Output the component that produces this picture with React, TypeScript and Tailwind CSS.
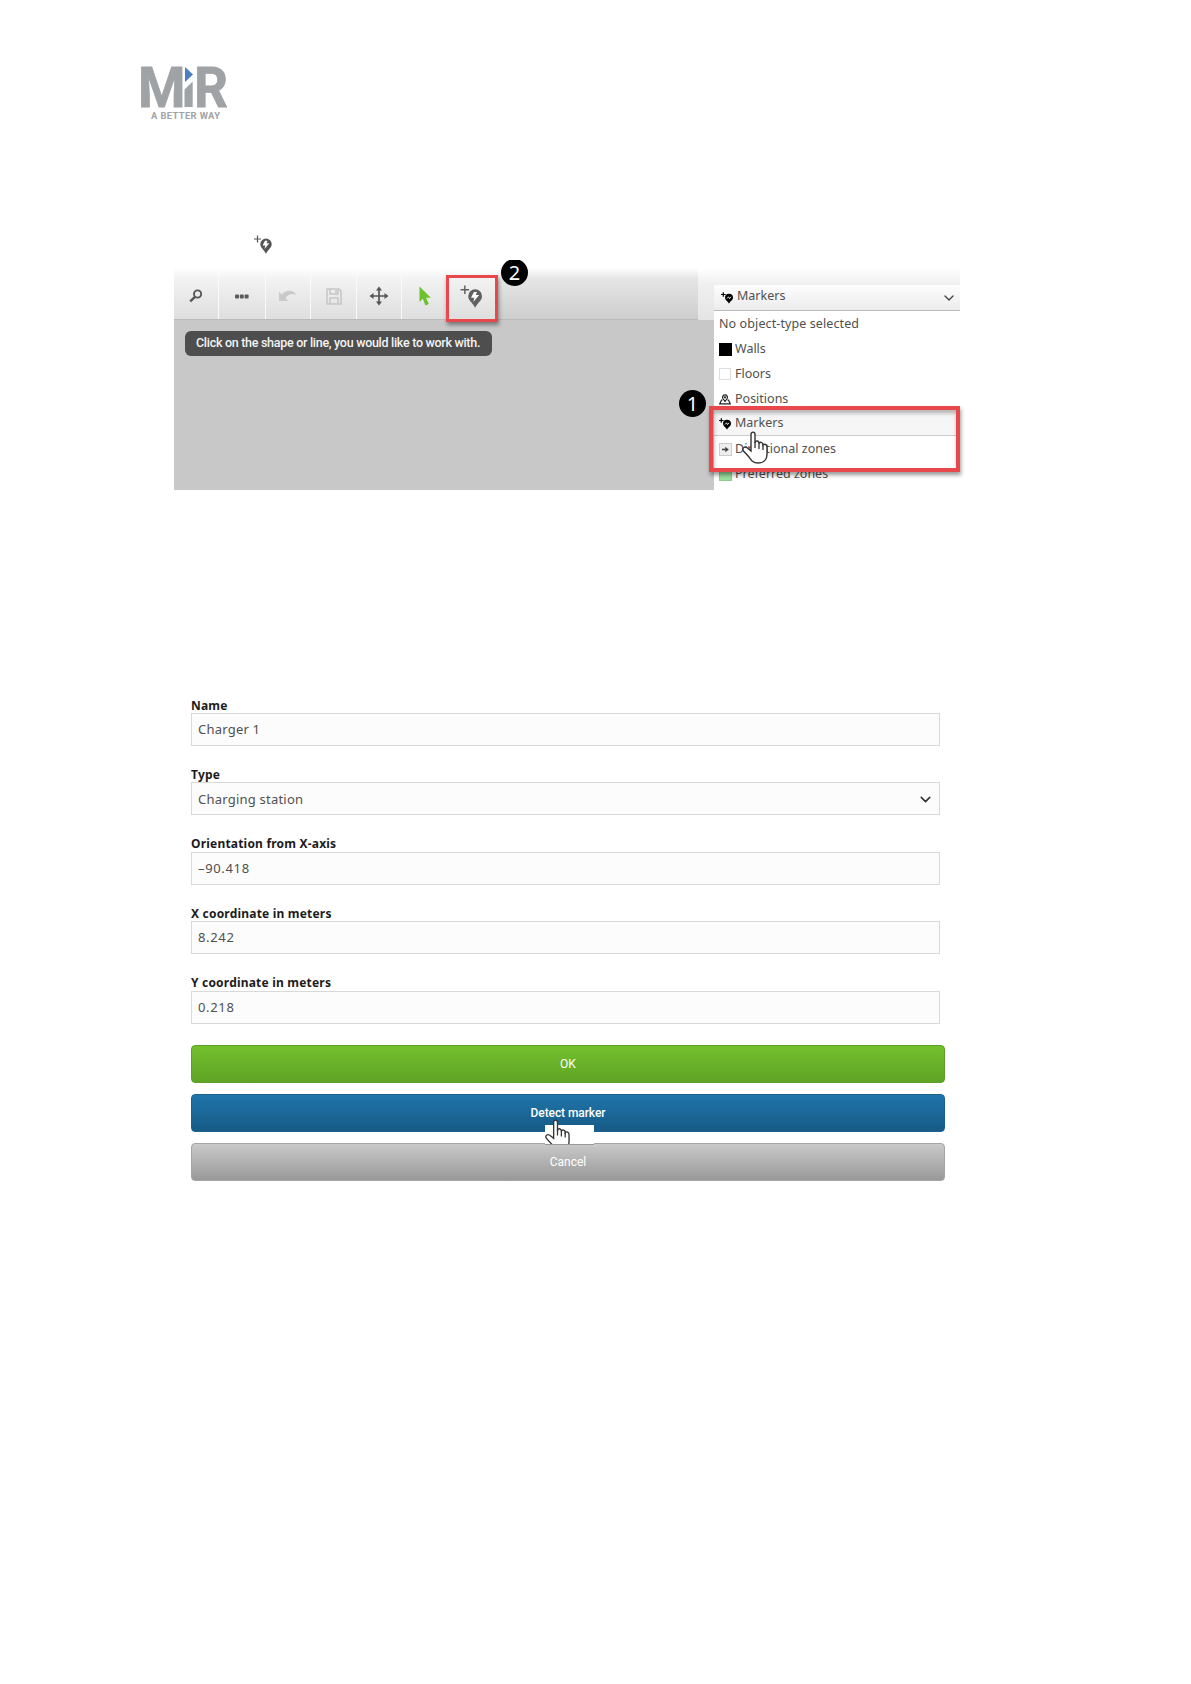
import { ChevronDown } from "lucide-react";
import clsx from "clsx";

const sans = "font-['Noto_Sans','Open_Sans',sans-serif]";
const roboto = "font-['Roboto',sans-serif]";

function Logo() {
  return (
    <svg width="90" height="56" viewBox="0 0 90 56" className="block overflow-visible">
      <g fill="#a0a3a6" className={roboto}>
        <text x="-3" y="40.7" fontSize="55.5" fontWeight="700" stroke="#a0a3a6" strokeWidth=".8" textLength="47.500" lengthAdjust="spacingAndGlyphs">
          M
        </text>
        <text x="53" y="40.7" fontSize="55.5" fontWeight="700" stroke="#a0a3a6" strokeWidth=".8" textLength="34" lengthAdjust="spacingAndGlyphs">
          R
        </text>
        <path d="M43.5 41V23.5L51.7 15.5V41Z" />
      </g>
      <path d="M44 1L52 8.5L44 16Z" fill="#4a7fc4" />
      <text x="10" y="53" fontSize="9.4" fontWeight="700" fill="#a0a3a6" textLength="69" className={roboto}>
        A BETTER WAY
      </text>
    </svg>
  );
}

function MarkerIcon({ className }: { className?: string }) {
  return (
    <svg viewBox="0 0 18 19" className={className}>
      <path d="M0 4H7M3.5 .5V7.5" stroke="currentColor" strokeWidth="1.2" fill="none" />
      <path d="M12 3.5a5.700 5.700 0 0 1 5.700 5.700c0 3.600-3.800 5.400-5.700 9.600C10.100 14.600 6.300 12.800 6.300 9.200A5.700 5.700 0 0 1 12 3.500Z" fill="currentColor" />
      <path d="M11 5.800L8.600 10.500H11.300L10.500 14L15.300 8.300H12.500L13.500 5.800" fill="white" />
    </svg>
  );
}

// Heavier version used at list size
function MarkerGlyph() {
  return (
    <svg width="12" height="12" viewBox="0 0 12 12" className="overflow-visible">
      <path d="M0 2.500H4.600M2.300 .2V4.800" stroke="black" strokeWidth="1.200" />
      <path d="M8 1.800a4 4 0 0 1 4 4c0 2.300-2.800 3.400-4 6C6.800 9.200 4 8.100 4 5.800A4 4 0 0 1 8 1.800Z" fill="black" />
      <path d="M6 6.500L7.500 4.800L8.500 6.600L10 4.800" stroke="white" strokeWidth=".9" fill="none" />
    </svg>
  );
}

function Hand({ className }: { className?: string }) {
  return (
    <svg viewBox="0 0 26 33" className={className}>
      <path
        d="M9 18V3.500C9 .3 13 .3 13 3.500V12C13.500 9 17 9.500 17 12.500C18 10.500 21 11 21 14C22.500 12.500 25 13.500 25 16V23C25 29 21 32 16 32C11 32 9.500 29.500 7 26L1.500 20C-.5 17 3 14.500 6 17.500L9 20Z"
        fill="white"
        stroke="#333"
        strokeWidth="1.4"
      />
      <path d="M13 11V17M17 12V18M21 14V19" stroke="#333" strokeWidth="1.3" />
    </svg>
  );
}

const tools = [
  {
    width: "w-[45px]",
    icon: (
      <svg width="14" height="14" viewBox="0 0 14 14" className="text-[#555]">
        <circle cx="8.600" cy="5" r="3.600" fill="none" stroke="currentColor" strokeWidth="1.900" />
        <path d="M6 7.800L1.200 12.300" stroke="currentColor" strokeWidth="2.400" />
      </svg>
    ),
  },
  {
    width: "w-[47px]",
    icon: (
      <svg width="14" height="5" viewBox="0 0 14 5" fill="#5b5b5b">
        <rect y=".5" width="4" height="4" rx="1" />
        <rect x="4.800" y=".5" width="4" height="4" rx="1" />
        <rect x="9.600" y=".5" width="4" height="4" rx="1" />
      </svg>
    ),
  },
  {
    width: "w-[45px]",
    icon: (
      <svg width="18" height="12" viewBox="0 0 18 12" fill="#c9c9c9">
        <path d="M0 2L0 11H9L6.500 8C9 4.500 13 3 17.500 5C14-.5 7-.5 3 4.500Z" />
      </svg>
    ),
  },
  {
    width: "w-[46px]",
    icon: (
      <svg width="16" height="17" viewBox="0 0 16 17" fill="none" stroke="#c6c6c6" strokeWidth="1.500">
        <path d="M1 1H13L15 3V16H1Z" />
        <path d="M4 1V6H12V1M4 16V10H12V16" />
        <path d="M10 2V5" />
      </svg>
    ),
  },
  {
    width: "w-[45px]",
    icon: (
      <svg width="20" height="20" viewBox="0 0 20 20">
        <path d="M10 3V17M3 10H17" stroke="#555" strokeWidth="1.700" />
        <path d="M10 .5L13 4.500H7ZM10 19.500L13 15.500H7ZM.5 10L4.500 7V13ZM19.500 10L15.500 7V13Z" fill="#555" />
      </svg>
    ),
  },
  {
    width: "w-[46px]",
    icon: (
      <svg width="12" height="20" viewBox="0 0 12 20">
        <path d="M.5 .5V16L3.800 12.800L6.500 19.500L9.800 18L7 11.800H11.800Z" fill="#6cc22b" />
      </svg>
    ),
  },
];

const objectTypes = [
  { label: "Walls", icon: <span className="size-[13px] shrink-0 bg-black" /> },
  { label: "Floors", icon: <span className="size-[12px] shrink-0 border border-[#ddd] bg-white" /> },
  {
    label: "Positions",
    icon: (
      <svg width="12" height="11" viewBox="0 0 12 11" fill="none" stroke="#222" strokeWidth="1.200">
        <path d="M3.500 6H2.500L.8 9.800H11.200L9.500 6H8.500M6 7.500L3.900 4.500A2.400 2.400 0 1 1 8.100 4.500Z" />
        <circle cx="6" cy="3.300" r=".5" />
      </svg>
    ),
  },
  { label: "Markers", icon: <MarkerGlyph />, active: true },
  {
    label: "Directional zones",
    icon: (
      <svg width="13" height="13" viewBox="0 0 13 13" className="shrink-0">
        <rect x=".5" y=".5" width="12" height="12" fill="#eee" stroke="#ccc" />
        <path d="M3 6.500H7" stroke="#444" strokeWidth="1.600" />
        <path d="M6.300 3.800L9.800 6.500L6.300 9.200Z" fill="#444" />
      </svg>
    ),
  },
  { label: "Preferred zones", icon: <span className="size-[13px] shrink-0 border border-[#8ccf8c] bg-[#98e09c]" /> },
];

const fields = [
  { label: "Name", value: "Charger 1" },
  { label: "Type", value: "Charging station", select: true },
  { label: "Orientation from X-axis", value: "–90.418", numeric: true },
  { label: "X coordinate in meters", value: "8.242", numeric: true },
  { label: "Y coordinate in meters", value: "0.218", numeric: true },
];

function Callout({ n, className }: { n: number; className?: string }) {
  return (
    <span
      className={clsx(
        "absolute flex size-[27px] items-center justify-center rounded-full bg-black text-[20px] leading-none text-white",
        sans,
        className
      )}
    >
      {n}
    </span>
  );
}

function MapEditor() {
  return (
    <section className="relative ml-[174px] mt-[14px] flex h-[222px] w-[786px]">
      {/* Toolbar and canvas */}
      <div className="flex w-[540px] flex-col">
        <div className="flex h-[52px]">
          <div className="flex w-[524px] border-b border-[#bbb] bg-linear-to-b from-white via-[#e6e6e6] via-20% to-[#cdcdcd]">
            {tools.map((tool, i) => (
              <div
                key={i}
                className={clsx(
                  "flex items-center justify-center bg-linear-to-b from-white via-[#f3f3f3] via-20% to-[#dedede] pt-[5px]",
                  i < 5 && "border-r border-[#fafafa]",
                  tool.width
                )}
              >
                {tool.icon}
              </div>
            ))}
            <div className="flex w-[50px] items-center justify-center bg-linear-to-b from-white via-[#f3f3f3] via-20% to-[#dedede] pt-[5px]">
              <MarkerIcon className="mr-[4px] h-[23px] w-[23px] text-[#606060]" />
            </div>
          </div>
          <div className="w-4 bg-linear-to-b from-white via-[#f0f0f0] via-30% to-[#e4e4e4]" />
        </div>
        <div className="flex-1 bg-[#c8c8c8] pl-[11px] pt-[11px]">
          <div
            className={clsx(
              "flex h-[25px] w-[307px] items-center whitespace-nowrap rounded-md bg-[#4e4e4e] pl-[11px] text-[12.500px] font-medium tracking-[-0.290px] text-[#f3f3f3]",
              roboto
            )}
          >
            Click on the shape or line, you would like to work with.
          </div>
        </div>
      </div>

      {/* Object-type dropdown */}
      <div className={clsx("flex w-[246px] flex-col overflow-hidden text-[12.500px] text-[#505050]", sans)}>
        <div className="h-[17px] shrink-0 bg-linear-to-b from-white to-[#efefef]" />
        <div className="flex h-[26px] shrink-0 items-center border-b border-[#bbb] bg-linear-to-b from-[#fdfdfd] to-[#ececec] pl-[7px] pr-[3px]">
          <MarkerGlyph />
          <span className="ml-[4px] pb-[2px]">Markers</span>
          <ChevronDown size={16} strokeWidth={2} className="ml-auto text-[#444]" />
        </div>
        <div className="flex h-[25px] shrink-0 items-center bg-white pl-[5px] pt-[1px] tracking-[0.100px]">
          No object-type selected
        </div>
        {objectTypes.map((type) => (
          <div
            key={type.label}
            className={clsx(
              "flex h-[25px] shrink-0 items-center gap-[4px] pl-[5px] pt-[1px]",
              type.active ? "border-b border-[#ccc] bg-[#f6f6f6]" : "bg-white"
            )}
          >
            <span className="flex w-[12px] justify-center">{type.icon}</span>
            {type.label}
          </div>
        ))}
      </div>

      <div className="absolute left-[272px] top-[7px] h-[47px] w-[52px] border-3 border-[#e8474b] shadow-[1px_3px_4px_rgba(0,0,0,0.4)]" />
      <Callout n={2} className="left-[327px] top-[-9px] [clip-path:inset(1px_0_0_0)]" />
      <div className="absolute left-[535px] top-[138px] h-[66px] w-[251px] border-4 border-[#e8474b] shadow-[1px_3px_4px_rgba(0,0,0,0.4),inset_1px_3px_4px_rgba(0,0,0,0.3)]" />
      <Callout n={1} className="left-[505px] top-[122px]" />
      <Hand className="absolute left-[568px] top-[163px] h-[33px] w-[26px]" />
    </section>
  );
}

function MarkerForm() {
  return (
    <section className="ml-[191px] w-[754px]">
      {fields.map((field) => (
        <div key={field.label} className={clsx("h-[69.400px] w-[749px]", sans)}>
          <div className="flex h-[15px] items-center text-[12px] font-bold tracking-[0.200px] text-[#1c1c1c]">{field.label}</div>
          <div
            className={clsx(
              "flex h-[33px] items-center border border-[#d9d9d9] bg-[#fcfcfc] pl-[6px] pr-[5px] pt-[1px] text-[13px] text-[#505050]",
              field.numeric ? "tracking-[0.650px]" : "tracking-[0.220px]"
            )}
          >
            {field.value}
            {field.select && <ChevronDown size={17} strokeWidth={2.200} className="ml-auto text-[#333]" />}
          </div>
        </div>
      ))}

      <div className={clsx("mt-[0.500px] flex flex-col gap-[11px] text-center text-[12px] leading-[36px] text-white", roboto)}>
        <div className="h-[38px] rounded-[4px] border border-[#5c9f27] bg-linear-to-b from-[#73c02e] to-[#5fa324]">OK</div>
        <div className="relative h-[38px] rounded-[4px] border border-[#1b628f] bg-linear-to-b from-[#1f75aa] to-[#175a86] font-medium tracking-[-0.080px]">
          Detect marker
          <div className="absolute left-[353px] top-[30px] z-10 h-[20px] w-[49px] border-b border-[#999] bg-white" />
          <div className="absolute left-[353px] top-[24px] z-10 h-[25px] w-[26px] overflow-hidden">
            <Hand className="h-[32px] w-[25px]" />
          </div>
        </div>
        <div className="h-[38px] rounded-[4px] border border-[#a5a5a5] bg-linear-to-b from-[#c9c9c9] to-[#999]">Cancel</div>
      </div>
    </section>
  );
}

export default function App() {
  return (
    <main className="flex h-[1684px] w-[1191px] flex-col bg-white">
      <header className="ml-[141px] mt-[66px] h-[56px]">
        <Logo />
      </header>
      <MarkerIcon className="ml-[254px] mt-[113px] h-[19px] w-[18px] shrink-0 text-[#555]" />
      <MapEditor />
      <div className="h-[208px] shrink-0" />
      <MarkerForm />
    </main>
  );
}
